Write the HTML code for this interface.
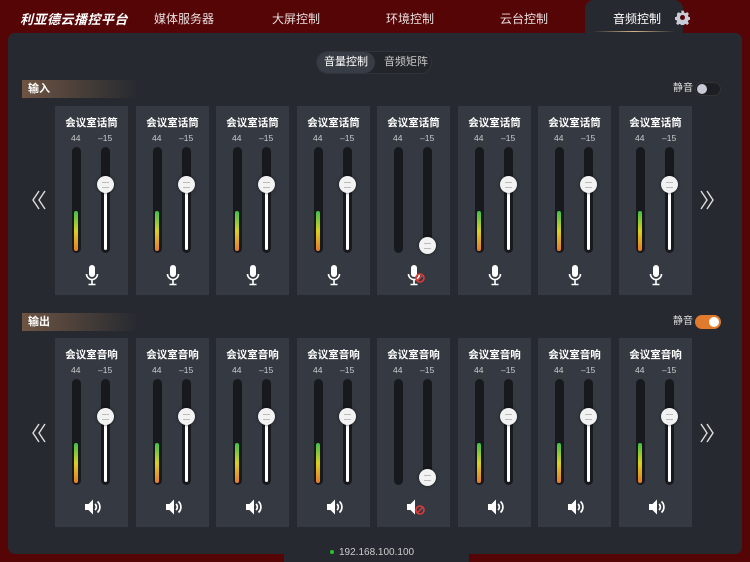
<!DOCTYPE html>
<html><head><meta charset="utf-8"><style>
*{margin:0;padding:0;box-sizing:border-box}
body{width:750px;height:562px;background:#560506;position:relative;overflow:hidden;font-family:"Liberation Sans","Noto Sans CJK SC",sans-serif;color:#fff}
.logo{position:absolute;left:20px;top:9px;font-size:13px;font-weight:bold;font-style:italic;letter-spacing:0.5px}
.nav{position:absolute;top:10px;font-size:12px;color:#e8dede}
.tab{position:absolute;left:585px;top:0;width:98px;height:40px;background:#262a30;border-radius:9px 9px 0 0}
.tab span{position:absolute;left:28px;top:10px;font-size:12px}
.tab i{position:absolute;left:8px;right:8px;top:31px;height:1px;background:linear-gradient(90deg,transparent,#d7b48a,transparent)}
.panel{position:absolute;left:8px;top:33px;width:734px;height:521px;background:#262a30;border-radius:7px}
.btab{position:absolute;left:284px;top:540px;width:185px;height:22px;background:#262a30}
.seg{position:absolute;left:316px;top:51px;width:116px;height:23px;border-radius:12px;background:#22262b;box-shadow:inset 0 0 0 1px #30343a;font-size:11px}
.seg .a{position:absolute;left:1px;top:1px;width:58px;height:21px;border-radius:11px;background:#383d45;text-align:center;line-height:21px}
.seg .b{position:absolute;left:68px;top:0;line-height:23px;color:#c8c8c8}
.hdr{position:absolute;left:22px;width:115px;height:18px;background:linear-gradient(90deg,#6e5443,rgba(110,84,67,0));font-size:11px;line-height:18px;padding-left:6px;font-weight:bold}
.mute{position:absolute;left:673px;font-size:10px;line-height:14px;color:#ddd}
.tg{position:absolute;left:695px;width:26px;height:14px;border-radius:7px}
.tg b{position:absolute;top:2px;width:10px;height:10px;border-radius:50%;background:#fff}
.card{position:absolute;width:73px;height:189px;background:#353a42}
.card .t{position:absolute;top:9px;width:100%;text-align:center;font-size:10.5px;font-weight:bold}
.card .n{position:absolute;top:27px;font-size:8.5px;color:#ccc}
.tr{position:absolute;top:41px;width:9px;height:106px;border-radius:5px;background:#17191d}
.lv{position:absolute;left:2px;bottom:2px;width:4px;height:40px;border-radius:2px;background:linear-gradient(#3fc04a,#d9d020 50%,#e87a2a)}
.fill{position:absolute;left:3px;width:3px;bottom:3px;background:#fff;border-radius:2px}
.knob{position:absolute;left:-4px;width:17px;height:17px;border-radius:50%;background:#f2f2f2;box-shadow:0 0 3px rgba(0,0,0,.6)}
.knob:after{content:"";position:absolute;left:5px;top:6px;width:7px;height:4px;border-top:1px solid #bbb;border-bottom:1px solid #bbb}
.ic{position:absolute;left:24px;top:158px;width:26px;height:22px}
.arr{position:absolute;width:16px;height:20px}
.ip{position:absolute;left:330px;top:547px;font-size:10px;color:#ccc}
.ip b{display:inline-block;width:4px;height:4px;border-radius:50%;background:#2bc02b;margin-right:5px;vertical-align:middle}
</style></head><body>
<div class="logo">利亚德云播控平台</div>
<div class="nav" style="left:154px">媒体服务器</div>
<div class="nav" style="left:272px">大屏控制</div>
<div class="nav" style="left:386px">环境控制</div>
<div class="nav" style="left:500px">云台控制</div>
<div class="tab"><span>音频控制</span><i></i></div>
<svg style="position:absolute;left:675px;top:10px" width="15" height="15" viewBox="0 0 24 24"><path fill="#c9ccd6" d="M10 1h4l.6 3 2.3 1 2.6-1.7 2.8 2.8-1.7 2.6 1 2.3 3 .6v4l-3 .6-1 2.3 1.7 2.6-2.8 2.8-2.6-1.7-2.3 1-.6 3h-4l-.6-3-2.3-1-2.6 1.7-2.8-2.8 1.7-2.6-1-2.3-3-.6v-4l3-.6 1-2.3L2.9 6.1l2.8-2.8 2.6 1.7 2.3-1z"/><circle cx="12" cy="12" r="4" fill="#560506"/></svg>
<div class="panel"></div>
<div class="btab"></div>
<div class="seg"><div class="a">音量控制</div><div class="b">音频矩阵</div></div>
<div class="hdr" style="top:80px">输入</div>
<div class="mute" style="top:82px">静音</div>
<div class="tg" style="top:82px;background:#1b1e22;box-shadow:inset 0 0 0 1px #333"><b style="left:2px;background:#c8cad6"></b></div>
<div class="hdr" style="top:313px">输出</div>
<div class="mute" style="top:315px">静音</div>
<div class="tg" style="top:315px;background:#e07a2c"><b style="left:14px"></b></div>
<svg class="arr" style="left:31px;top:190px" viewBox="0 0 16 20"><path d="M8 1L2 10l6 9M14 1L8 10l6 9" stroke="#ddd" stroke-width="1.4" fill="none"/></svg>
<svg class="arr" style="left:31px;top:423px" viewBox="0 0 16 20"><path d="M8 1L2 10l6 9M14 1L8 10l6 9" stroke="#ddd" stroke-width="1.4" fill="none"/></svg>
<svg class="arr" style="left:699px;top:190px" viewBox="0 0 16 20"><path d="M2 1l6 9-6 9M8 1l6 9-6 9" stroke="#ddd" stroke-width="1.4" fill="none"/></svg>
<svg class="arr" style="left:699px;top:423px" viewBox="0 0 16 20"><path d="M2 1l6 9-6 9M8 1l6 9-6 9" stroke="#ddd" stroke-width="1.4" fill="none"/></svg>
<div id="cards"></div>
<div class="ip"><b></b>192.168.100.100</div>
<script>
(function(){
var h='';
var mic='<svg class="ic" viewBox="0 0 26 22"><rect x="10" y="1" width="6" height="12" rx="3" fill="#fff"/><path d="M7.5 10a5.5 5.5 0 0 0 11 0M13 16v4M9.5 20.5h7" stroke="#fff" stroke-width="1.6" fill="none"/>';
var spk='<svg class="ic" viewBox="0 0 26 22"><path d="M6 8h3.5l4.5-4.5v15L9.5 14H6z" fill="#fff"/><path d="M16 8a4 4 0 0 1 0 6M18.5 5.5a7.5 7.5 0 0 1 0 11" stroke="#fff" stroke-width="1.7" fill="none"/>';
var spkm='<svg class="ic" viewBox="0 0 26 22"><path d="M6 8h3.5l4.5-4.5v15L9.5 14H6z" fill="#fff"/>';
var no='<circle cx="19" cy="14" r="4" fill="none" stroke="#e03a3a" stroke-width="1.6"/><path d="M16.5 16.5l5-5" stroke="#e03a3a" stroke-width="1.4"/>';
for(var r=0;r<2;r++){var ty=r?338:106;for(var i=0;i<8;i++){var x=55+Math.round(i*80.5);var m=i==4;var kt=m?90:29;
var icon=r?(m?spkm:spk):mic;
h+='<div class="card" style="left:'+x+'px;top:'+ty+'px"><div class="t">'+(r?'会议室音响':'会议室话筒')+'</div><div class="n" style="left:16px">44</div><div class="n" style="left:43px">–15</div>'+
'<div class="tr" style="left:17px">'+(m?'':'<div class="lv"></div>')+'</div>'+
'<div class="tr" style="left:46px"><div class="fill" style="top:'+(kt+8)+'px"></div><div class="knob" style="top:'+kt+'px"></div></div>'+
icon+(m?no:'')+'</svg></div>';}}
document.getElementById('cards').innerHTML=h;
})();
</script>
</body></html>
